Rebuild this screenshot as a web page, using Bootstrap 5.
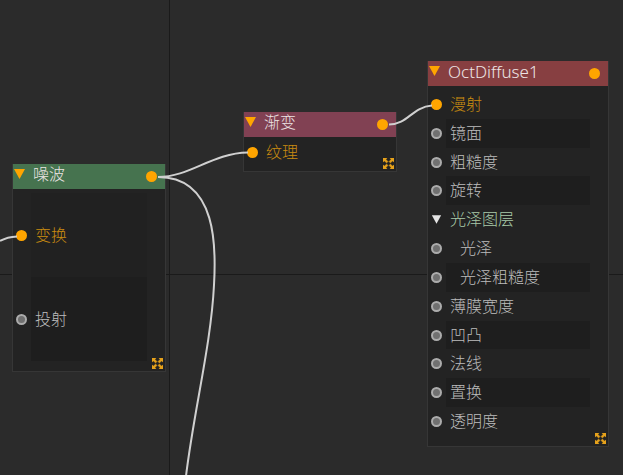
<!DOCTYPE html>
<html lang="zh-CN">
<head>
<meta charset="utf-8">
<meta name="viewport" content="width=device-width, initial-scale=1">
<title>节点编辑器</title>
<link href="https://cdn.jsdelivr.net/npm/bootstrap@5.3.0/dist/css/bootstrap.min.css" rel="stylesheet">
<style>
  body { background: #2b2b2b; color: #bcbcbc; font: 300 16px/23px "Noto Sans", "Noto Sans CJK SC", sans-serif; }
  .graph { isolation: isolate; }
  .axis-v { left: 169px; width: 1px; background: #1a1a1a; }
  .axis-h { top: 274px; height: 1px; background: #1a1a1a; }
  .wires { fill: none; stroke: #d0d0d0; stroke-width: 2; pointer-events: none; }

  .node { background: #232323; border: 1px solid #363636; border-top: 0; }
  .node-noise { left: 12px; top: 164px; width: 154px; }
  .node-gradient { left: 243px; top: 112px; width: 154px; }
  .node-diffuse { left: 427px; top: 61px; width: 182px; }

  .node-head { height: 25px; padding-right: 8px; color: #ece4e4; }
  .node-noise .node-head { background: #46734f; }
  .node-gradient .node-head { background: #814153; }
  .node-diffuse .node-head { background: #873f41; }
  .node-title { font-size: 16px; font-weight: 300; line-height: 21px; padding-left: 7px; }
  .node-diffuse .node-title { font-size: 17px; }

  .fold { width: 13px; height: 20px; color: #ffa500; }
  .fold-sub { width: 11px; margin-right: 4px; color: #e4e4e4; }
  .port { width: 11px; height: 11px; background: #707070; border: 2px solid #acacac; }
  .port.on { background: #ffa500; border-color: #ffa500; }

  .slots { padding: 4px 18px 0 3px; }
  .slot-label { padding-left: 4px; }
  .slot .port { margin-right: 4px; }
  .linked { color: #ca8c10; }
  .group-name { color: #a9cba9; }
  .nested { padding-left: 14px; }
  .dim { background: #1e1e1e; }
  .node-noise .slot { min-height: 84px; }
  .node-noise .slots { padding-bottom: 10px; }
  .node-noise .field-a { background: #212121; }
  .node-gradient .slots { padding-bottom: 7px; }
  .node-diffuse .slots { min-height: 360px; padding-bottom: 10px; }
  .expand { right: 0; bottom: 1px; width: 13px; height: 13px; color: #e5a11c; }
  svg { display: block; }
</style>
<script src="https://cdn.jsdelivr.net/npm/bootstrap@5.3.0/dist/js/bootstrap.bundle.min.js" defer></script>
</head>
<body>
<svg class="d-none" aria-hidden="true">
  <symbol id="tri" viewBox="0 0 13 11"><path d="M1 0H12L6.5 10Z" fill="currentColor"/></symbol>
  <symbol id="grow" viewBox="0 0 11 11"><path d="M0 0H4L3 1.5 5 3.6 3.6 5 1.5 3 0 4ZM11 0V4L9.500 3 7.400 5 6 3.600 8 1.500 7 0ZM0 11V7L1.500 8 3.600 6 5 7.400 3 9.500 4 11ZM11 11H7L8 9.500 6 7.400 7.400 6 9.500 8 11 7Z" fill="currentColor" stroke="currentColor" stroke-width=".4"/></symbol>
</svg>

<main class="graph position-relative vh-100 overflow-hidden">
  <div class="axis-v position-absolute top-0 bottom-0"></div>
  <div class="axis-h position-absolute start-0 end-0"></div>

  <section class="node node-noise position-absolute">
    <header class="node-head d-flex align-items-start">
      <button type="button" class="fold btn p-0 border-0 rounded-0 flex-shrink-0" aria-label="折叠噪波"><svg width="13" height="11"><use href="#tri"/></svg></button>
      <h2 class="node-title flex-grow-1 mb-0">噪波</h2>
      <button type="button" class="port on rounded-circle p-0 align-self-center" aria-label="噪波输出"></button>
    </header>
    <div class="slots d-flex flex-column">
      <div class="slot d-flex align-items-center"><button type="button" class="port on rounded-circle p-0" aria-label="变换输入"></button><span class="slot-label linked field-a flex-grow-1 align-self-stretch d-flex align-items-center">变换</span></div>
      <div class="slot d-flex align-items-center"><button type="button" class="port rounded-circle p-0" aria-label="投射输入"></button><span class="slot-label dim flex-grow-1 align-self-stretch d-flex align-items-center">投射</span></div>
    </div>
    <button type="button" class="expand btn p-0 border-0 position-absolute" aria-label="展开噪波"><svg width="11" height="11"><use href="#grow"/></svg></button>
  </section>

  <section class="node node-gradient position-absolute">
    <header class="node-head d-flex align-items-start">
      <button type="button" class="fold btn p-0 border-0 rounded-0 flex-shrink-0" aria-label="折叠渐变"><svg width="13" height="11"><use href="#tri"/></svg></button>
      <h2 class="node-title flex-grow-1 mb-0">渐变</h2>
      <button type="button" class="port on rounded-circle p-0 align-self-center" aria-label="渐变输出"></button>
    </header>
    <div class="slots d-flex flex-column">
      <div class="slot d-flex align-items-center"><button type="button" class="port on rounded-circle p-0" aria-label="纹理输入"></button><span class="slot-label linked">纹理</span></div>
    </div>
    <button type="button" class="expand btn p-0 border-0 position-absolute" aria-label="展开渐变"><svg width="11" height="11"><use href="#grow"/></svg></button>
  </section>

  <section class="node node-diffuse position-absolute">
    <header class="node-head d-flex align-items-start">
      <button type="button" class="fold btn p-0 border-0 rounded-0 flex-shrink-0" aria-label="折叠 OctDiffuse1"><svg width="13" height="11"><use href="#tri"/></svg></button>
      <h2 class="node-title flex-grow-1 mb-0">OctDiffuse1</h2>
      <button type="button" class="port on rounded-circle p-0 align-self-center" aria-label="OctDiffuse1 输出"></button>
    </header>
    <div class="slots d-flex flex-column">
      <div class="slot d-flex align-items-center flex-fill"><button type="button" class="port on rounded-circle p-0" aria-label="漫射输入"></button><span class="slot-label linked flex-grow-1">漫射</span></div>
      <div class="slot d-flex align-items-center flex-fill"><button type="button" class="port rounded-circle p-0" aria-label="镜面输入"></button><span class="slot-label dim flex-grow-1 align-self-stretch d-flex align-items-center">镜面</span></div>
      <div class="slot d-flex align-items-center flex-fill"><button type="button" class="port rounded-circle p-0" aria-label="粗糙度输入"></button><span class="slot-label flex-grow-1">粗糙度</span></div>
      <div class="slot d-flex align-items-center flex-fill"><button type="button" class="port rounded-circle p-0" aria-label="旋转输入"></button><span class="slot-label dim flex-grow-1 align-self-stretch d-flex align-items-center">旋转</span></div>
      <div class="slot d-flex align-items-center flex-fill"><button type="button" class="fold-sub btn p-0 border-0" aria-label="折叠光泽图层"><svg width="11" height="10"><use href="#tri"/></svg></button><span class="slot-label group-name">光泽图层</span></div>
      <div class="slot d-flex align-items-center flex-fill"><button type="button" class="port rounded-circle p-0" aria-label="光泽输入"></button><span class="slot-label nested flex-grow-1">光泽</span></div>
      <div class="slot d-flex align-items-center flex-fill"><button type="button" class="port rounded-circle p-0" aria-label="光泽粗糙度输入"></button><span class="slot-label nested dim flex-grow-1 align-self-stretch d-flex align-items-center">光泽粗糙度</span></div>
      <div class="slot d-flex align-items-center flex-fill"><button type="button" class="port rounded-circle p-0" aria-label="薄膜宽度输入"></button><span class="slot-label flex-grow-1">薄膜宽度</span></div>
      <div class="slot d-flex align-items-center flex-fill"><button type="button" class="port rounded-circle p-0" aria-label="凹凸输入"></button><span class="slot-label dim flex-grow-1 align-self-stretch d-flex align-items-center">凹凸</span></div>
      <div class="slot d-flex align-items-center flex-fill"><button type="button" class="port rounded-circle p-0" aria-label="法线输入"></button><span class="slot-label flex-grow-1">法线</span></div>
      <div class="slot d-flex align-items-center flex-fill"><button type="button" class="port rounded-circle p-0" aria-label="置换输入"></button><span class="slot-label dim flex-grow-1 align-self-stretch d-flex align-items-center">置换</span></div>
      <div class="slot d-flex align-items-center flex-fill"><button type="button" class="port rounded-circle p-0" aria-label="透明度输入"></button><span class="slot-label flex-grow-1">透明度</span></div>
    </div>
    <button type="button" class="expand btn p-0 border-0 position-absolute" aria-label="展开 OctDiffuse1"><svg width="11" height="11"><use href="#grow"/></svg></button>
  </section>

  <svg class="wires position-absolute top-0 start-0 w-100 h-100" aria-hidden="true">
    <path d="M0 241Q7 237 17 236.500"/>
    <path d="M158 177C190 177 212 153 248 152.500"/>
    <path d="M158 177C218 177 216 250 214 285C211 345 194 410 186 476"/>
    <path d="M389 124.500C408 124.500 412 107 432 105.500"/>
  </svg>
</main>
</body>
</html>
